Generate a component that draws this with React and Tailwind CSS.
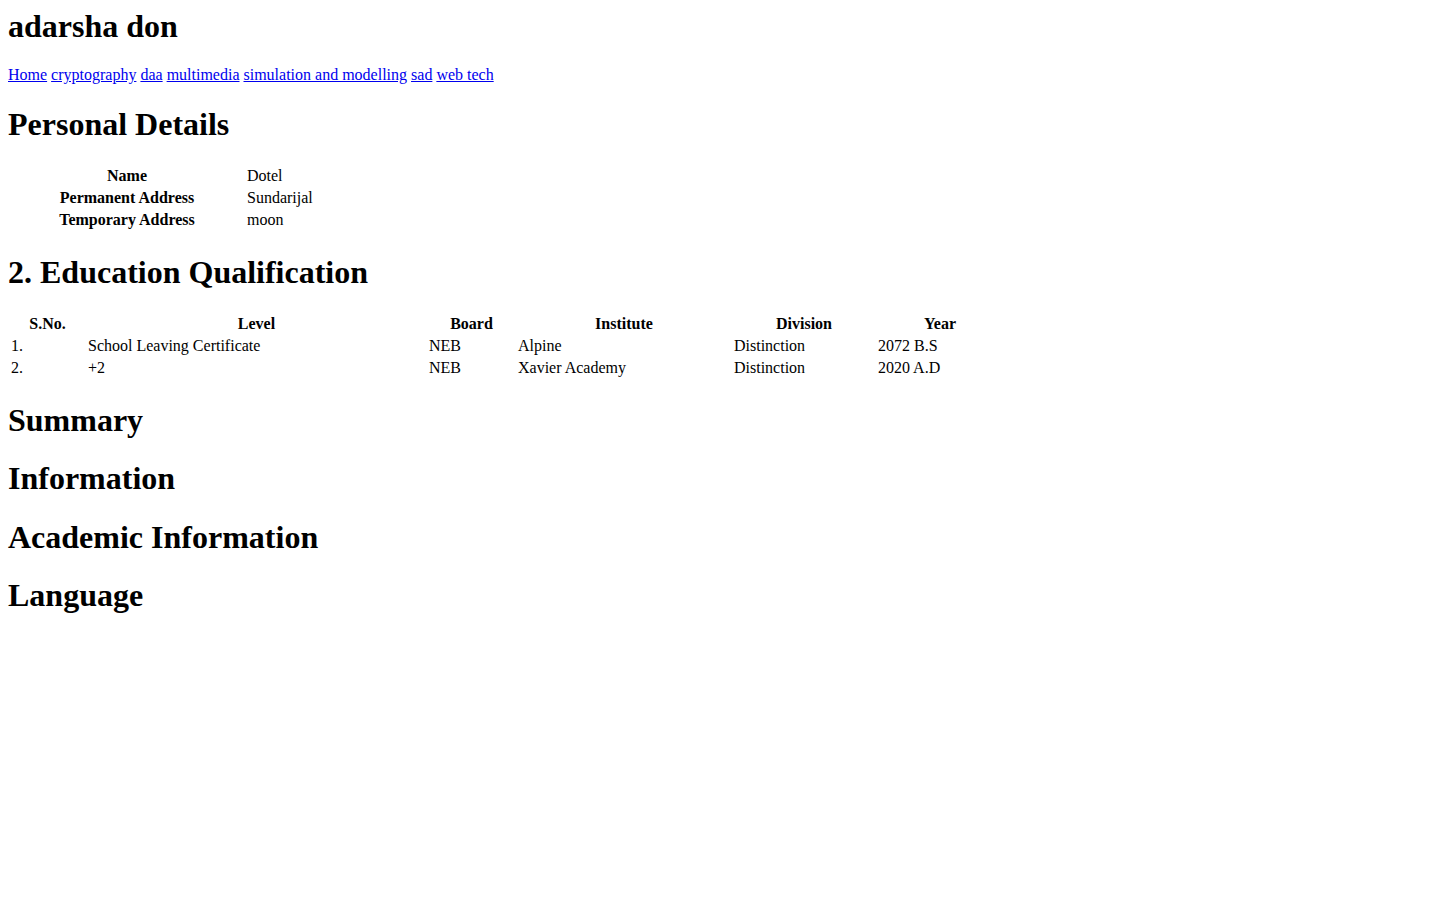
export default function App() {
  const links = ["Home", "cryptography", "daa", "multimedia", "simulation and modelling", "sad", "web tech"];
  const personal = [
    ["Name", "Dotel"],
    ["Permanent Address", "Sundarijal"],
    ["Temporary Address", "moon"],
  ];
  const education = [
    ["1.", "School Leaving Certificate", "NEB", "Alpine", "Distinction", "2072 B.S"],
    ["2.", "+2", "NEB", "Xavier Academy", "Distinction", "2020 A.D"],
  ];
  const heads = ["S.No.", "Level", "Board", "Institute", "Division", "Year"];
  const widths = ["w-[75px]", "w-[339px]", "w-[87px]", "w-[214px]", "w-[142px]", "w-[126px]"];

  return (
    <div className="bg-white px-2 pt-2 pb-8 text-black text-[16px] leading-[18px] font-['Liberation_Serif',serif] min-h-screen">
      <h1 className="mt-0 mb-[21.44px] text-[32px] leading-[37px] font-bold">adarsha don</h1>
      <p className="my-4">
        {links.map((l, i) => (
          <span key={l}>
            <a href="#" className="text-[#0000ee] underline">{l}</a>
            {i < links.length - 1 ? " " : ""}
          </span>
        ))}
      </p>

      <h1 className="my-[21.44px] text-[32px] leading-[37px] font-bold">Personal Details</h1>
      <table className="border-separate border-spacing-[2px]">
        <tbody>
          {personal.map(([k, v]) => (
            <tr key={k}>
              <th className="w-[234px] p-px text-center font-bold">{k}</th>
              <td className="p-px">{v}</td>
            </tr>
          ))}
        </tbody>
      </table>

      <h1 className="my-[21.44px] text-[32px] leading-[37px] font-bold">2. Education Qualification</h1>
      <table className="w-[997px] table-fixed border-separate border-spacing-[2px]">
        <thead>
          <tr>
            {heads.map((h, i) => (
              <th key={h} className={`${widths[i]} p-px text-center font-bold`}>{h}</th>
            ))}
          </tr>
        </thead>
        <tbody>
          {education.map((row) => (
            <tr key={row[0]}>
              {row.map((c, i) => (
                <td key={i} className="p-px text-left">{c}</td>
              ))}
            </tr>
          ))}
        </tbody>
      </table>

      <h1 className="my-[21.44px] text-[32px] leading-[37px] font-bold">Summary</h1>
      <h1 className="my-[21.44px] text-[32px] leading-[37px] font-bold">Information</h1>
      <h1 className="my-[21.44px] text-[32px] leading-[37px] font-bold">Academic Information</h1>
      <h1 className="my-[21.44px] text-[32px] leading-[37px] font-bold">Language</h1>
    </div>
  );
}
